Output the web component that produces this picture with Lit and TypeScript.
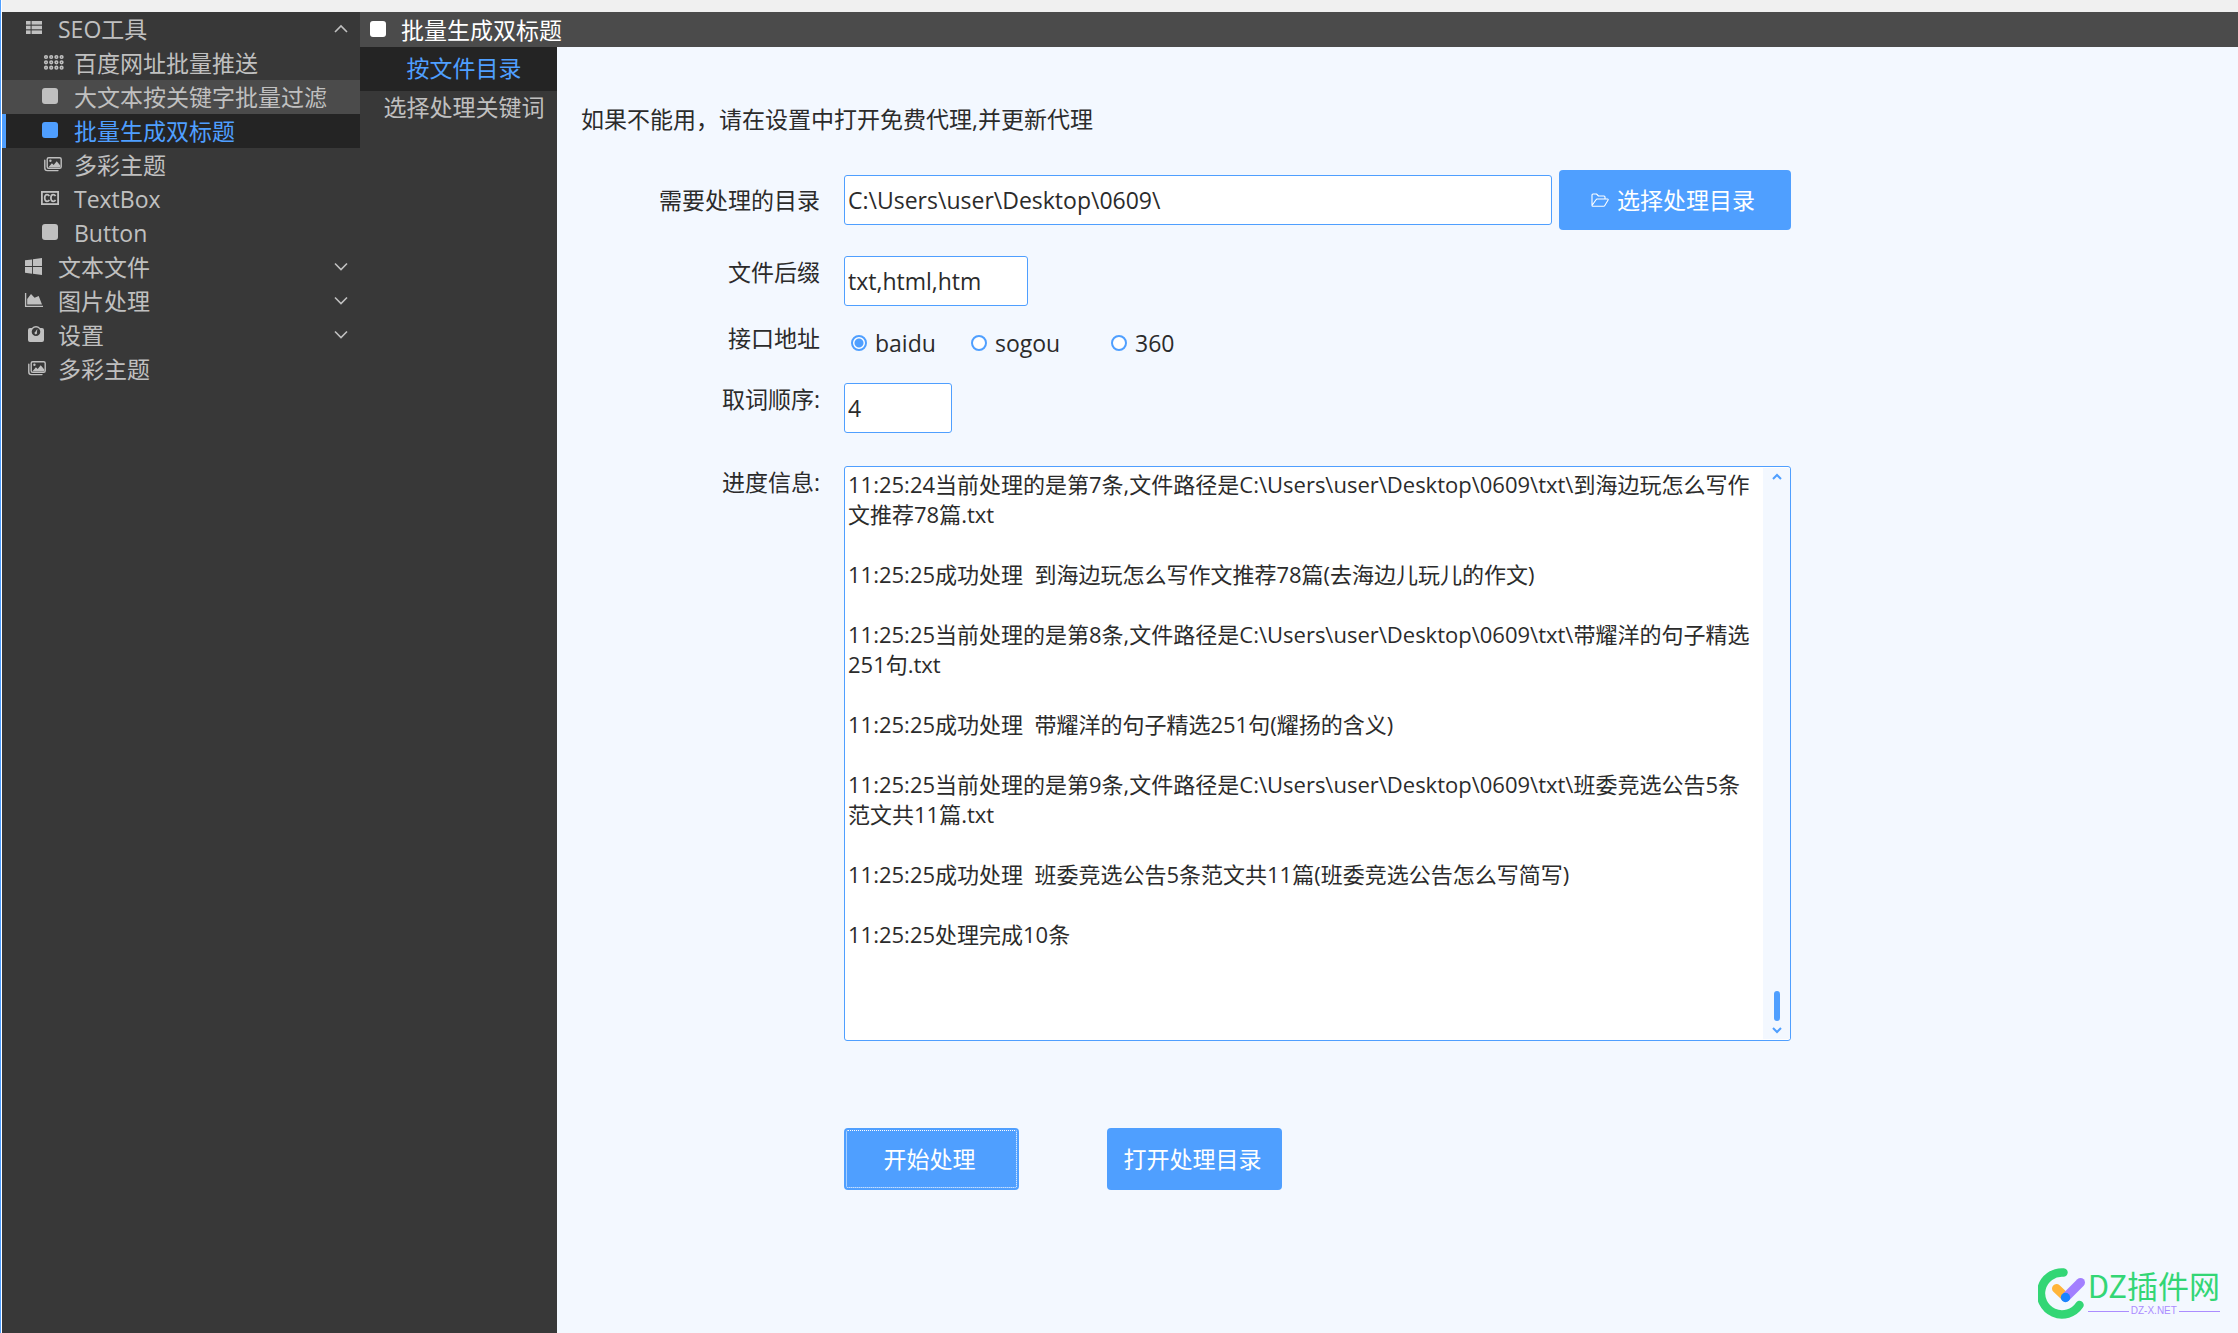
import { LitElement, html, svg, css } from "lit";
import { customElement, property, state } from "lit/decorators.js";
import { classMap } from "lit/directives/class-map.js";

const glyphs: Record<string, unknown> = {
  list: svg`<g fill="currentColor"><rect x="2" y="4" width="4.6" height="3.6"/><rect x="7.6" y="4" width="10.4" height="3.6"/><rect x="2" y="8.7" width="4.6" height="3.6"/><rect x="7.6" y="8.7" width="10.4" height="3.6"/><rect x="2" y="13.4" width="4.6" height="3.6"/><rect x="7.6" y="13.4" width="10.4" height="3.6"/></g>`,
  dots: svg`<g fill="none" stroke="currentColor" stroke-width="1.6">${[6, 11.2, 16.4, 21.6].map((x) =>
    [6, 11.3, 16.7].map((y) => svg`<circle cx=${x} cy=${y} r="1.3"/>`)
  )}</g>`,
  square: svg`<rect x="2" y="3" width="16" height="16" rx="3" fill="currentColor"/>`,
  images: svg`<path d="M4.8 7.2V15a2.6 2.6 0 0 0 2.6 2.6H18" fill="none" stroke="currentColor" stroke-width="1.4" stroke-linecap="round"/><rect x="7.2" y="4.7" width="14" height="10.6" rx="1.6" fill="none" stroke="currentColor" stroke-width="1.4"/><path d="M8.5 14.2l3.4-4 1.8 1.8 3-3.8 3.6 4.4v1.6z" fill="currentColor"/><circle cx="10.4" cy="7.7" r="1.2" fill="currentColor"/>`,
  cc: svg`<rect x="1.9" y="4.9" width="16.2" height="12.2" fill="none" stroke="currentColor" stroke-width="1.8"/><path d="M9.3 9.2C8.8 8.1 7.9 7.7 7 7.7c-1.5 0-2.3 1.3-2.3 3.3s.8 3.3 2.3 3.3c.9 0 1.800-.4 2.300-1.500M15.500 9.200c-.5-1.100-1.400-1.500-2.300-1.500-1.500 0-2.300 1.300-2.300 3.300s.8 3.300 2.300 3.300c.9 0 1.800-.4 2.300-1.500" fill="none" stroke="currentColor" stroke-width="1.7"/>`,
  windows: svg`<path d="M1 5.3l7-.9v6.700H1zM8.900 4.300L18 3v8.100H8.900zM1 12h7v6.700l-7-.9zM8.900 12H18v8l-9.100-1.200z" fill="currentColor"/>`,
  area: svg`<path d="M1.6 4v13.400H19" fill="none" stroke="currentColor" stroke-width="1.3"/><path d="M3.200 15.500V10L7 5l3.600 3.700L14.700 7l3.300 8.500z" fill="currentColor"/>`,
  weight: svg`<path fill-rule="evenodd" d="M6 5h1.800a5.600 5.600 0 0 1 8.400 0H18a2 2 0 0 1 2 2v10a2 2 0 0 1-2 2H6a2 2 0 0 1-2-2V7a2 2 0 0 1 2-2zm6-.6a4.300 4.300 0 1 0 0 8.600 4.300 4.300 0 0 0 0-8.600z" fill="currentColor"/><path d="M13.400 5.800l-.5 3.400a1.300 1.300 0 1 1-1.500-.5z" fill="currentColor"/>`,
};

const icon = (name: string) =>
  html`<svg class="icon" viewBox="0 0 24 24" width="24" height="24" aria-hidden="true">${glyphs[name]}</svg>`;

const fontStack = css`"Open Sans", "Noto Sans CJK SC", sans-serif`;

interface NavItem {
  label: string;
  icon: string;
  level: 1 | 2;
  open?: boolean;
  hot?: boolean;
}

const NAV: NavItem[] = [
  { label: "SEO工具", icon: "list", level: 1, open: true },
  { label: "百度网址批量推送", icon: "dots", level: 2 },
  { label: "大文本按关键字批量过滤", icon: "square", level: 2, hot: true },
  { label: "批量生成双标题", icon: "square", level: 2 },
  { label: "多彩主题", icon: "images", level: 2 },
  { label: "TextBox", icon: "cc", level: 2 },
  { label: "Button", icon: "square", level: 2 },
  { label: "文本文件", icon: "windows", level: 1, open: false },
  { label: "图片处理", icon: "area", level: 1, open: false },
  { label: "设置", icon: "weight", level: 1, open: false },
  { label: "多彩主题", icon: "images", level: 1 },
];

const LOG = [
  "11:25:24当前处理的是第7条,文件路径是C:\\Users\\user\\Desktop\\0609\\txt\\到海边玩怎么写作文推荐78篇.txt",
  "11:25:25成功处理  到海边玩怎么写作文推荐78篇(去海边儿玩儿的作文)",
  "11:25:25当前处理的是第8条,文件路径是C:\\Users\\user\\Desktop\\0609\\txt\\带耀洋的句子精选251句.txt",
  "11:25:25成功处理  带耀洋的句子精选251句(耀扬的含义)",
  "11:25:25当前处理的是第9条,文件路径是C:\\Users\\user\\Desktop\\0609\\txt\\班委竞选公告5条范文共11篇.txt",
  "11:25:25成功处理  班委竞选公告5条范文共11篇(班委竞选公告怎么写简写)",
  "11:25:25处理完成10条",
].join("\n\n");

@customElement("side-nav")
export class SideNav extends LitElement {
  @state() private selected = 3;

  static styles = css`
    :host {
      display: block;
      background: #383838;
    }
    .item {
      display: flex;
      align-items: center;
      box-sizing: border-box;
      width: 100%;
      height: 34px;
      margin: 0;
      border: 0;
      border-left: 4px solid transparent;
      padding: 0 12px 0 18px;
      background: none;
      color: #c0c0c0;
      font: 23px/34px ${fontStack};
      text-align: left;
      white-space: nowrap;
    }
    .sub {
      padding-left: 34px;
    }
    .hot {
      background: #4b4b4b;
      border-left-color: #4b4b4b;
    }
    .selected {
      background: #242424;
      border-left-color: #4f9fff;
      color: #4f9fff;
    }
    .icon {
      flex: none;
      margin-right: 10px;
    }
    .label {
      flex: 1;
    }
  `;

  render() {
    return html`<nav aria-label="主菜单">
      ${NAV.map(
        (n, i) => html`<button
          type="button"
          class=${classMap({ item: true, sub: n.level === 2, hot: !!n.hot, selected: i === this.selected })}
          @click=${() => (this.selected = i)}
        >
          ${icon(n.icon)}<span class="label">${n.label}</span>
          ${n.open === undefined
            ? ""
            : html`<svg width="14" height="10" viewBox="0 0 14 10" aria-hidden="true">
                <path d=${n.open ? "M1 8l6-6 6 6" : "M1 1.5l6 6 6-6"} fill="none" stroke="currentColor" stroke-width="1.6" />
              </svg>`}
        </button>`
      )}
    </nav>`;
  }
}

@customElement("log-box")
export class LogBox extends LitElement {
  @property() text = "";

  static styles = css`
    :host {
      display: block;
    }
    .box {
      display: flex;
      border: 1px solid #4f9fff;
      border-radius: 3px;
      background: #fff;
    }
    .text {
      flex: 1;
      min-width: 0;
      border: 0;
      margin: 0;
      padding: 2px 8px 1px 3px;
      background: none;
      color: #2b2b2b;
      font: 22px/30px ${fontStack};
      resize: none;
      overflow: hidden;
      outline: 0;
    }
    .bar {
      display: flex;
      flex-direction: column;
      align-items: center;
      width: 27px;
      margin: 1px 0;
      background: #f3f8ff;
    }
    .step {
      border: 0;
      padding: 5px 8px;
      background: none;
      line-height: 0;
    }
    .track {
      flex: 1;
      display: flex;
      flex-direction: column;
      justify-content: flex-end;
    }
    .thumb {
      width: 6px;
      height: 30px;
      border-radius: 3px;
      background: #4f9fff;
    }
  `;

  render() {
    const arrow = (d: string) =>
      html`<svg width="10" height="8" viewBox="0 0 10 8" aria-hidden="true"><path d=${d} fill="none" stroke="#4f9fff" stroke-width="2" /></svg>`;
    return html`<div class="box">
      <textarea class="text" rows="19" readonly aria-label="进度信息" .value=${this.text}></textarea>
      <div class="bar">
        <button class="step" type="button" aria-label="向上滚动">${arrow("M1 6l4-4 4 4")}</button>
        <div class="track"><div class="thumb"></div></div>
        <button class="step" type="button" aria-label="向下滚动">${arrow("M1 2l4 4 4-4")}</button>
      </div>
    </div>`;
  }
}

@customElement("site-mark")
export class SiteMark extends LitElement {
  static styles = css`
    :host {
      display: flex;
      align-items: center;
      gap: 2px;
    }
    .words {
      display: flex;
      flex-direction: column;
      gap: 4px;
    }
    .name {
      color: #33d675;
      font: 31px/32px "Noto Sans CJK SC", sans-serif;
    }
    .site {
      display: flex;
      align-items: center;
      gap: 2px;
      color: #ab8cff;
      font: 10px/12px "Liberation Sans", sans-serif;
    }
    .site::before,
    .site::after {
      content: "";
      flex: 1;
      height: 1px;
      background: currentColor;
    }
  `;

  render() {
    return html`<svg width="48" height="52" viewBox="0 0 48 52" aria-hidden="true">
        <g fill="none" stroke-linecap="round">
          <path d="M25.500 5.500A21 21 0 1 0 41.500 38" stroke="#33d675" stroke-width="8.500" />
          <path d="M18.500 21.500l9 8.500" stroke="#ffb53a" stroke-width="9" />
          <path d="M28 30l14.500-14.500" stroke="#a27fff" stroke-width="9" />
        </g>
        <circle cx="27.500" cy="30.500" r="4.700" fill="#1a84ff" />
      </svg>
      <div class="words">
        <span class="name">DZ插件网</span>
        <span class="site">DZ-X.NET</span>
      </div>`;
  }
}

@customElement("app-root")
export class AppRoot extends LitElement {
  @state() private tab = 0;

  static styles = css`
    :host {
      display: block;
      font: 23px/32px ${fontStack};
      color: #2b2b2b;
    }
    .window {
      position: relative;
      display: flex;
      flex-direction: column;
      box-sizing: border-box;
      min-height: 100vh;
      border-left: 1px solid #4f9fff;
      padding-left: 1px;
      background: #fff;
    }
    .top {
      height: 12px;
      background: #f0f0f0;
    }
    .body {
      flex: 1;
      display: grid;
      grid-template-columns: 358px minmax(0, 1fr);
    }
    .page {
      display: grid;
      grid-template: 35px 1fr / 197px minmax(0, 1fr);
    }
    .title {
      grid-column: 1 / -1;
      display: flex;
      align-items: center;
      gap: 9px;
      margin: 0;
      padding-left: 8px;
      background: #4b4b4b;
      color: #fff;
      font: inherit;
    }
    .tabs {
      display: flex;
      flex-direction: column;
      background: #383838;
    }
    .tab {
      height: 34px;
      border: 0;
      margin: 0;
      padding: 0 0 2px 11px;
      background: none;
      color: #c0c0c0;
      font: inherit;
      white-space: nowrap;
    }
    .tab.active {
      height: 44px;
      background: #242424;
      color: #4f9fff;
    }
    .content {
      padding: 56px 24px 0;
      background: #f3f8ff;
    }
    .hint {
      margin: 0;
      line-height: 32px;
    }
    .row {
      display: grid;
      grid-template-columns: 239px minmax(0, 947px);
      column-gap: 24px;
      align-items: start;
    }
    .row > .caption {
      text-align: right;
      white-space: nowrap;
    }
    .folder {
      align-items: center;
      margin-top: 35px;
    }
    .suffix {
      margin-top: 26px;
    }
    .source {
      margin-top: 16px;
    }
    .order {
      margin-top: 19px;
    }
    .progress {
      margin-top: 33px;
    }
    .actions {
      margin-top: 87px;
    }
    .line {
      display: flex;
      align-items: center;
      gap: 7px;
    }
    .field {
      box-sizing: border-box;
      height: 50px;
      border: 1px solid #4f9fff;
      border-radius: 3px;
      margin: 0;
      padding: 0 3px;
      background: #fff;
      color: inherit;
      font: 23px/32px ${fontStack};
      outline: 0;
    }
    .wide {
      flex: 1;
      min-width: 0;
    }
    .medium {
      width: 184px;
    }
    .short {
      width: 108px;
    }
    .button {
      display: flex;
      align-items: center;
      justify-content: center;
      gap: 8px;
      box-sizing: border-box;
      width: 175px;
      height: 62px;
      border: 0;
      border-radius: 4px;
      padding: 0 4px 0 0;
      background: #4f9fff;
      color: #fff;
      font: inherit;
      white-space: nowrap;
    }
    .pick {
      width: 232px;
      height: 60px;
    }
    .focused {
      outline: 1px dotted #fff;
      outline-offset: -3px;
    }
    .pair {
      display: flex;
      gap: 88px;
      grid-column: 2;
    }
    .choices {
      display: grid;
      grid-template-columns: 120px 140px auto;
      justify-content: start;
      border: 0;
      margin: 0;
      padding: 0 0 0 7px;
      line-height: 42px;
    }
    .choice {
      display: flex;
      align-items: center;
      gap: 8px;
    }
    .radio {
      appearance: none;
      box-sizing: border-box;
      width: 16px;
      height: 16px;
      margin: 0;
      border: 2px solid #4f9fff;
      border-radius: 50%;
      background: #fff;
    }
    .radio:checked {
      background: radial-gradient(circle, #4f9fff 4px, #fff 5px);
    }
    .mark {
      position: absolute;
      right: 18px;
      bottom: 14px;
    }
  `;

  render() {
    return html`<div class="window">
      <div class="top"></div>
      <div class="body">
        <side-nav></side-nav>
        <div class="page">
          <h1 class="title">${icon("square")}批量生成双标题</h1>
          <div class="tabs">
            ${["按文件目录", "选择处理关键词"].map(
              (t, i) => html`<button
                type="button"
                class=${classMap({ tab: true, active: i === this.tab })}
                @click=${() => (this.tab = i)}
              >${t}</button>`
            )}
          </div>
          <main class="content">
            <p class="hint">如果不能用，请在设置中打开免费代理,并更新代理</p>
            <div class="row folder">
              <label class="caption" for="folder">需要处理的目录</label>
              <div class="line">
                <input class="field wide" id="folder" value="C:\\Users\\user\\Desktop\\0609\\" />
                <button class="button pick" type="button">
                  <svg width="18" height="14" viewBox="0 0 18 14" fill="none" stroke="currentColor" stroke-width="1.1" stroke-linejoin="round" aria-hidden="true">
                    <path d="M1 12.500V2a1 1 0 0 1 1-1h3.500l2 2H13a1 1 0 0 1 1 1v2M1 12.500L5 6.700a1.500 1.500 0 0 1 1.200-.7h10.300a.7.7 0 0 1 .6 1l-3.300 5.500a1.500 1.500 0 0 1-1.300.8H1.800a.8.8 0 0 1-.8-.8z" />
                  </svg>
                  选择处理目录
                </button>
              </div>
            </div>
            <div class="row suffix">
              <label class="caption" for="suffix">文件后缀</label>
              <div class="line"><input class="field medium" id="suffix" value="txt,html,htm" /></div>
            </div>
            <div class="row source">
              <span class="caption" id="source">接口地址</span>
              <div class="choices" role="radiogroup" aria-labelledby="source">
                ${["baidu", "sogou", "360"].map(
                  (s, i) => html`<label class="choice"
                    ><input class="radio" type="radio" name="source" value=${s} ?checked=${i === 0} />${s}</label
                  >`
                )}
              </div>
            </div>
            <div class="row order">
              <label class="caption" for="order">取词顺序:</label>
              <div class="line"><input class="field short" id="order" value="4" /></div>
            </div>
            <div class="row progress">
              <span class="caption">进度信息:</span>
              <log-box .text=${LOG}></log-box>
            </div>
            <div class="row actions">
              <div class="pair">
                <button class="button focused" type="button">开始处理</button>
                <button class="button" type="button">打开处理目录</button>
              </div>
            </div>
          </main>
        </div>
      </div>
      <site-mark class="mark"></site-mark>
    </div>`;
  }
}
